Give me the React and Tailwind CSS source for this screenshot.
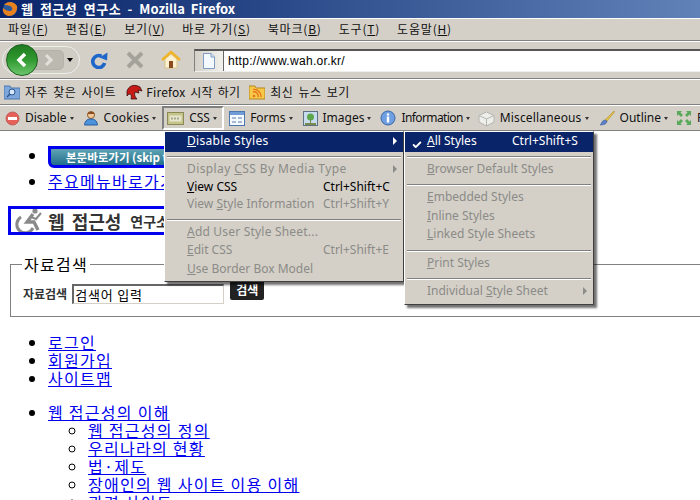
import { Check } from "lucide-react";

const kr = "font-['Noto_Sans_CJK_KR','Noto_Sans',sans-serif]";

const MenuLabel = ({ text, hot }) => (
  <span>
    {text}(<span className="underline">{hot}</span>)
  </span>
);

const Caret = () => <span className="-ml-[2px] inline-block h-0 w-0 border-x-[2.5px] border-t-[3px] border-x-transparent border-t-[#333]" />;

const Sep = ({ className = "mt-[4px] mb-[2px]" }) => <div className={`mx-[2px] h-[2px] border-t border-b border-t-[#808080] border-b-white ${className}`} />;

const Item = ({ label, hot, rest, shortcut, disabled, arrow, active, check, h = "h-[18px]", textClass = "" }) => (
  <div className={`relative flex items-center pr-[7px] pl-[22px] ${h} ${active ? "bg-[#0a246a] pb-[2px] text-white" : disabled ? "text-[#8b8b87]" : "text-black"}`}>
    {check && <Check size={10} strokeWidth={4.5} className="absolute left-[7px] top-[8px]" />}
    <span className={`whitespace-pre ${textClass}`}>
      {label}
      <span className="underline">{hot}</span>
      {rest}
    </span>
    {shortcut && <span className="absolute left-[158px]">{shortcut}</span>}
    {arrow && <span className={`absolute right-[6px] h-0 w-0 border-y-[4px] border-l-[4px] border-y-transparent ${active ? "border-l-white" : "border-l-[#8b8b87]"}`} />}
  </div>
);

const DevBtn = ({ icon, label, className = "", textClass = "" }) => (
  <div className={`flex shrink-0 items-center gap-[5px] ${className}`}>
    {icon}
    <span className={textClass}>{label}</span>
    <Caret />
  </div>
);

export default function App() {
  return (
    <div className="relative h-[500px] w-[700px] overflow-hidden bg-white font-['Noto_Sans',sans-serif] text-[12px] text-[#111]">
      {/* title bar */}
      <div className="flex h-[18px] items-center gap-[3px] bg-gradient-to-r from-[#0a246a] to-[#6182b8] pl-[2px] text-white">
        <svg width="16" height="16" viewBox="0 0 16 16">
          <circle cx="8" cy="8" r="7" fill="#2a5a9c" />
          <path d="M2 4 C5 0 12 0 15 5 C16 10 12 15 7 15 C3 15 0 11 1 7 C3 9 5 10 8 10 C11 10 11 6 8 5 C6 4 4 4 2 4Z" fill="#e8821e" />
        </svg>
        <span className={`${kr} text-[13px] font-bold tracking-[.5px] [word-spacing:3px]`}>
          웹 접근성 연구소 - <span className="tracking-normal">Mozilla Firefox</span>
        </span>
      </div>
      <div className="h-[2px] border-t border-white bg-[#d4d0c8]" />

      <div className="bg-[#d4d0c8]">
        {/* menu bar */}
        <div className={`flex h-[21px] items-center gap-[17px] border-b border-[#808080] pb-[2px] pl-[8px] tracking-[.8px] ${kr}`}>
          <MenuLabel text="파일" hot="F" />
          <MenuLabel text="편집" hot="E" />
          <MenuLabel text="보기" hot="V" />
          <MenuLabel text="바로 가기" hot="S" />
          <MenuLabel text="북마크" hot="B" />
          <MenuLabel text="도구" hot="T" />
          <MenuLabel text="도움말" hot="H" />
        </div>

        {/* navigation bar */}
        <div className="flex h-[38px] items-center border-t border-b border-t-white border-b-[#808080] pl-[2px]">
          <div className="relative flex h-[28px] w-[78px] shrink-0 items-center justify-end rounded-full border border-[#eeeeea] bg-[#d0cdc5] pr-[6px]">
            <span className="h-0 w-0 border-x-[3px] border-t-[4px] border-x-transparent border-t-black" />
            <div className="absolute top-[3px] left-[30px] flex h-[20px] w-[31px] items-center justify-center rounded-r-[5px] border border-[#b5b2aa] bg-[#bcb9b1]">
              <svg width="12" height="14" viewBox="0 0 12 14" fill="none">
                <path d="M3 2 L8 7 L3 12" stroke="#e2e0da" strokeWidth="3" />
              </svg>
            </div>
            <div className="absolute -top-[3px] left-[3px] flex h-[32px] w-[32px] items-center justify-center rounded-full border border-[#1f5e1f] bg-gradient-to-b from-[#1f7a1f] via-[#2f9a2f] to-[#6cc66c]">
              <svg width="16" height="18" viewBox="0 0 16 18" fill="none">
                <path d="M11 3 L5 9 L11 15" stroke="white" strokeWidth="3.5" />
              </svg>
            </div>
          </div>
          <svg width="18" height="18" viewBox="0 0 18 18" fill="none" className="ml-[10px] shrink-0">
            <path d="M11.5 5.2 A6 6 0 1 0 14.6 12" stroke="#1e66c9" strokeWidth="3.6" />
            <path d="M9.5 6.5 L17.5 1.5 L17 9.5Z" fill="#1e66c9" />
          </svg>
          <svg width="18" height="18" viewBox="0 0 18 18" fill="none" className="ml-[18px] shrink-0">
            <path d="M2 2 L16 16 M16 2 L2 16" stroke="#a5a29a" strokeWidth="4" />
          </svg>
          <svg width="20" height="20" viewBox="0 0 20 20" className="ml-[17px] shrink-0">
            <path d="M4 9 V18 H16 V9 L10 4Z" fill="#fbf0cf" stroke="#d9c48a" />
            <path d="M1 10 L10 2 L19 10" fill="none" stroke="#f0b429" strokeWidth="2.5" />
            <rect x="8" y="11" width="4" height="7" fill="#8a4b1e" />
          </svg>
          <div className="ml-[13px] flex h-[23px] flex-1 items-stretch border-t-2 border-b border-l border-t-[#555] border-b-[#eeeeea] border-l-[#808080] bg-white">
            <div className="flex w-[29px] shrink-0 items-center justify-center border-r border-[#666] bg-gradient-to-r from-[#d4d0c8] to-[#f2f1ec]">
              <svg width="14" height="16" viewBox="0 0 14 16">
                <path d="M1.5 .5 H9 L12.5 4 V15.5 H1.5Z" fill="#f4f8ff" stroke="#7f9cc4" />
                <path d="M9 .5 V4 H12.5" fill="#d5e2f5" stroke="#7f9cc4" />
              </svg>
            </div>
            <span className="pl-[4px] font-['Liberation_Sans',sans-serif] leading-[20px] tracking-[.3px] text-black">http://www.wah.or.kr/</span>
          </div>
        </div>

        {/* bookmarks bar */}
        <div className={`flex h-[26px] items-center border-t border-b border-t-white border-b-[#808080] pl-[4px] ${kr}`}>
          <svg width="16" height="16" viewBox="0 0 16 16">
            <path d="M0 2 H6 L7 4 H16 V15 H0Z" fill="#7ea7dc" stroke="#4b76b0" />
            <circle cx="8" cy="8" r="3" fill="#d7e6f8" stroke="#27528c" />
            <path d="M6 10 L3 13" stroke="#27528c" strokeWidth="1.5" />
          </svg>
          <span className="ml-[5px] tracking-[.5px] [word-spacing:2px]">자주 찾은 사이트</span>
          <svg width="18" height="16" viewBox="0 0 18 16" className="ml-[9px]">
            <path d="M2 7 C4 1 10 0 15 3 L17 7 L13 6 L14 9 L10 8 C9 11 10 13 12 15 L6 15 C7 12 6 10 4 10 L2 12Z" fill="#c61a17" stroke="#2a0505" strokeWidth=".7" />
          </svg>
          <span className="ml-[3px] tracking-[.2px] [word-spacing:2px]">Firefox 시작 하기</span>
          <svg width="16" height="16" viewBox="0 0 16 16" className="ml-[9px]">
            <path d="M0 2 H6 L7 4 H16 V15 H0Z" fill="#f7c948" stroke="#b5851d" />
            <circle cx="5" cy="12" r="1.3" fill="#e8731e" />
            <path d="M4 8 A4 4 0 0 1 9 13 M4 5.5 A7 7 0 0 1 12 13" fill="none" stroke="#e8731e" strokeWidth="1.4" />
          </svg>
          <span className="ml-[5px] tracking-[.5px] [word-spacing:2px]">최신 뉴스 보기</span>
        </div>

        {/* web developer toolbar */}
        <div className="flex h-[26px] items-center overflow-hidden border-t border-b border-t-white border-b-[#808080] pl-[5px]">
          <DevBtn
            label="Disable"
            icon={
              <svg width="15" height="15" viewBox="0 0 15 15">
                <circle cx="7.5" cy="7.5" r="6.5" fill="#e6605a" stroke="#c0605a" />
                <rect x="3" y="6" width="9" height="3" fill="white" />
              </svg>
            }
          />
          <DevBtn
            className="ml-[9px]"
            label="Cookies"
            textClass="tracking-[.2px]"
            icon={
              <svg width="16" height="16" viewBox="0 0 16 16">
                <circle cx="8" cy="5" r="3.5" fill="#f2c79a" stroke="#8a5a2a" />
                <path d="M4.5 4 C5 1 11 1 11.5 4Z" fill="#8a4b1e" />
                <path d="M1.5 15 C2 10 5 9 8 9 C11 9 14 10 14.5 15Z" fill="#4b93dd" stroke="#2a5d9c" />
              </svg>
            }
          />
          <div className="ml-[6px] flex h-[24px] w-[62px] shrink-0 items-center gap-[5px] border-2 border-t-[#808080] border-r-white border-b-white border-l-[#808080] pl-[3px]">
            <svg width="17" height="13" viewBox="0 0 17 13">
              <rect x=".5" y=".5" width="16" height="12" fill="#c6c488" stroke="#8a8a58" />
              <rect x="2.5" y="3.5" width="12" height="6" fill="#e6e6d0" />
              <path d="M4 6.5 H13" stroke="#a8a888" strokeWidth="2" strokeDasharray="2 1" />
            </svg>
            <span>CSS</span>
            <Caret />
          </div>
          <DevBtn
            className="ml-[5px]"
            label="Forms"
            icon={
              <svg width="16" height="15" viewBox="0 0 16 15">
                <rect x=".5" y=".5" width="15" height="14" fill="#f4f8ff" stroke="#4b76b0" />
                <rect x="1" y="1" width="14" height="3" fill="#6f9bd6" />
                <path d="M3 7 H7 M3 11 H7 M9 7 H13 M9 11 H13" stroke="#5a7aa8" />
              </svg>
            }
          />
          <DevBtn
            className="ml-[10px]"
            label="Images"
            icon={
              <svg width="15" height="15" viewBox="0 0 15 15">
                <rect x=".5" y=".5" width="14" height="14" fill="#c7dcef" stroke="#5c7186" />
                <circle cx="7.5" cy="6" r="3.5" fill="#5da84a" />
                <path d="M7 8 H8 V12 H7Z M2 12 H13 V14 H2Z" fill="#7a8a4a" />
              </svg>
            }
          />
          <DevBtn
            className="ml-[9px]"
            label="Information"
            textClass="tracking-[-.6px]"
            icon={
              <svg width="16" height="16" viewBox="0 0 16 16">
                <circle cx="8" cy="8" r="7" fill="#6f9fe0" stroke="#3a68ac" />
                <circle cx="8" cy="4.5" r="1.2" fill="white" />
                <rect x="6.8" y="6.5" width="2.4" height="6" fill="white" />
              </svg>
            }
          />
          <DevBtn
            className="ml-[8px]"
            label="Miscellaneous"
            textClass="tracking-[.15px]"
            icon={
              <svg width="17" height="17" viewBox="0 0 17 17">
                <path d="M8.5 2 L16 5.5 V12 L8.5 16 L1 12 V5.5Z" fill="#eeeeea" stroke="#b5b5b0" />
                <path d="M1 5.5 L8.5 9 L16 5.5 M8.5 9 V16" fill="none" stroke="#b5b5b0" />
              </svg>
            }
          />
          <DevBtn
            className="ml-[10px]"
            label="Outline"
            icon={
              <svg width="16" height="16" viewBox="0 0 16 16">
                <path d="M15 1 L6 10 L8 11 L15.5 2Z" fill="#e8c84a" stroke="#a68a22" strokeWidth=".6" />
                <path d="M6 10 C3 10 3 13 1 15 C5 15 8 14 8 11Z" fill="#5a80c8" stroke="#3a5a98" strokeWidth=".5" />
              </svg>
            }
          />
          <svg width="16" height="16" viewBox="0 0 16 16" className="ml-[8px] shrink-0">
            <path d="M1 1 H6 L4.5 2.5 L7 5 L5 7 L2.5 4.5 L1 6Z M15 1 V6 L13.5 4.5 L11 7 L9 5 L11.5 2.5 L10 1Z M1 15 V10 L2.5 11.5 L5 9 L7 11 L4.5 13.5 L6 15Z M15 15 H10 L11.5 13.5 L9 11 L11 9 L13.5 11.5 L15 10Z" fill="#5aa85a" />
          </svg>
          <span className="ml-[5px]">Resize</span>
        </div>
      </div>

      {/* page content */}
      <div className={`${kr} text-[16px] leading-[18px] tracking-[1.28px] text-black`}>
        <ul className="mt-[15px] list-disc pl-[48px]">
          <li>
            <div className="mb-[4px] flex h-[22px] w-[140px] items-center overflow-hidden rounded-bl-[6px] border-[3px] border-[#0000ee] bg-gradient-to-b from-[#5fa4b4] to-[#1f6f8c] pl-[15px] text-[11.5px] font-bold tracking-normal whitespace-nowrap text-white">
              본문바로가기 (skip to
            </div>
          </li>
          <li>
            <a className="text-[#0000ee] underline">주요메뉴바로가기</a>
          </li>
        </ul>

        <div className="mt-[16px] ml-[8px] flex h-[29px] w-[200px] items-center overflow-hidden border-[3px] border-[#0000ee] pl-[2px] tracking-normal whitespace-nowrap">
          <svg width="30" height="26" viewBox="0 0 30 26" fill="none" className="shrink-0">
            <circle cx="22" cy="3" r="2.6" fill="#8a8a8a" />
            <path d="M20 6 L14 14 H21 L25 22" stroke="#8a8a8a" strokeWidth="3.4" />
            <path d="M18 9 L23 11 L28 5" stroke="#8a8a8a" strokeWidth="2" />
            <path d="M8 9 A8.5 8.5 0 1 0 20 20" stroke="#8a8a8a" strokeWidth="3" />
          </svg>
          <span className="ml-[5px] text-[18px] font-bold text-[#333] [word-spacing:3px]">웹 접근성</span>
          <span className="ml-[9px] text-[14px] font-bold text-[#333]">연구소</span>
        </div>

        <fieldset className="mt-[20px] ml-[10px] h-[62px] w-[700px] border border-[#808080] pl-[11px]">
          <legend className="px-[2px]">자료검색</legend>
          <div className="flex items-start pl-[1px]">
            <label className="mt-[12px] text-[12px] font-bold tracking-normal text-[#333]">자료검색</label>
            <div className="mt-[11px] ml-[5px] flex h-[20px] w-[152px] items-center border-t-2 border-r border-b border-l-2 border-t-[#666] border-r-[#d4d0c8] border-b-[#d4d0c8] border-l-[#666] pl-[1px] text-[13px] tracking-[.8px]">
              검색어 입력
            </div>
            <div className="mt-[7px] ml-[6px] flex h-[20px] w-[34px] items-center justify-center rounded-[2px] bg-[#222] text-[12px] font-bold tracking-normal text-white">
              검색
            </div>
          </div>
        </fieldset>

        <ul className="mt-[16px] list-disc pl-[48px] text-[#0000ee] marker:text-black">
          <li><a className="underline">로그인</a></li>
          <li><a className="underline">회원가입</a></li>
          <li><a className="underline">사이트맵</a></li>
        </ul>

        <ul className="mt-[16px] list-disc pl-[48px] text-[#0000ee] marker:text-black">
          <li>
            <a className="underline">웹 접근성의 이해</a>
            <ul className="list-[circle] pl-[40px]">
              <li><a className="underline">웹 접근성의 정의</a></li>
              <li><a className="underline">우리나라의 현황</a></li>
              <li><a className="underline">법·제도</a></li>
              <li><a className="underline">장애인의 웹 사이트 이용 이해</a></li>
              <li><a className="underline">관련 사이트</a></li>
            </ul>
          </li>
        </ul>
      </div>

      {/* CSS dropdown */}
      <div className="absolute top-[131px] left-[164px] w-[240px] border border-t-white border-r-[#404040] border-b-[#404040] border-l-white bg-[#d4d0c8] pb-[3px] shadow-[3px_3px_2px_rgba(0,0,0,0.55)]">
        <Item label="" hot="D" rest="isable Styles" active arrow h="h-[20px]" textClass="tracking-[.3px]" />
        <Sep />
        <Item label="Display " hot="C" rest="SS By Media Type" disabled arrow textClass="tracking-[.4px]" />
        <Item label="" hot="V" rest="iew CSS" shortcut="Ctrl+Shift+C" h="h-[17px]" />
        <Item label="View " hot="S" rest="tyle Information" shortcut="Ctrl+Shift+Y" disabled h="h-[17px]" />
        <Sep className="mt-[7px] mb-[2px]" />
        <Item label="" hot="A" rest="dd User Style Sheet..." disabled textClass="tracking-[.2px]" />
        <Item label="" hot="E" rest="dit CSS" shortcut="Ctrl+Shift+E" disabled />
        <Item label="" hot="U" rest="se Border Box Model" disabled h="h-[19px]" />
      </div>

      {/* Disable Styles submenu */}
      <div className="absolute top-[131px] left-[404px] w-[190px] border border-t-white border-r-[#404040] border-b-[#404040] border-l-white bg-[#d4d0c8] pb-[4px] shadow-[3px_3px_2px_rgba(0,0,0,0.55)]">
        <div className="relative">
          <Item label="" hot="A" rest="ll Styles" active check h="h-[20px]" />
          <span className="absolute top-0 left-[107px] text-white">Ctrl+Shift+S</span>
        </div>
        <Sep />
        <Item label="" hot="B" rest="rowser Default Styles" disabled />
        <Sep className="mt-[6px] mb-[2px]" />
        <Item label="" hot="E" rest="mbedded Styles" disabled />
        <Item label="" hot="I" rest="nline Styles" disabled h="h-[19px]" />
        <Item label="" hot="L" rest="inked Style Sheets" disabled />
        <Sep className="mt-[7px] mb-[2px]" />
        <Item label="" hot="P" rest="rint Styles" disabled />
        <Sep className="mt-[6px] mb-[2px]" />
        <Item label="Individual " hot="S" rest="tyle Sheet" disabled arrow />
      </div>
    </div>
  );
}
